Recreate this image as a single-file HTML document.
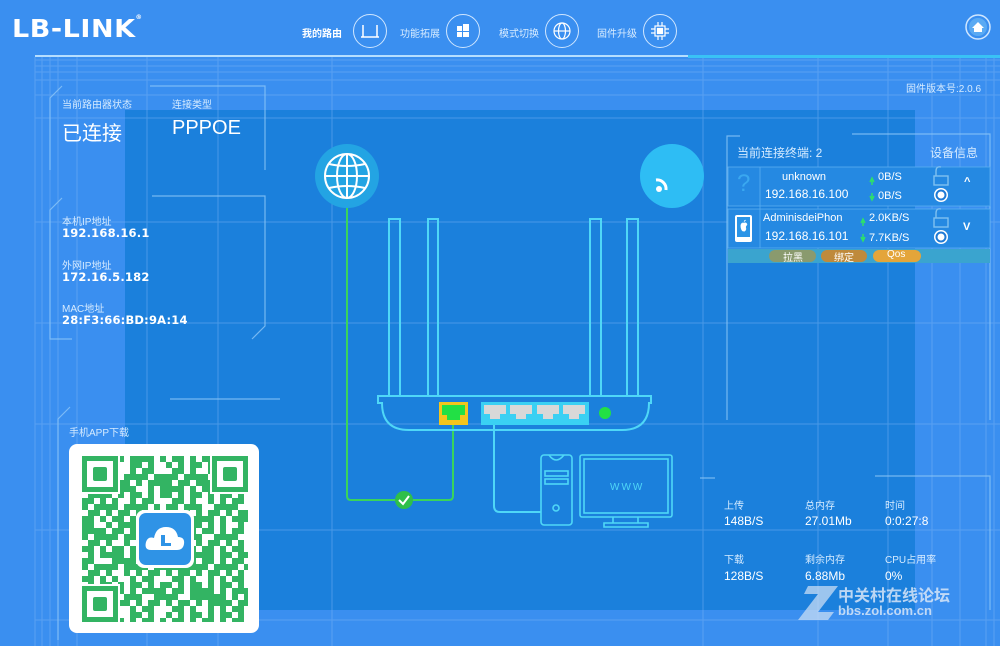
<!DOCTYPE html>
<html><head><meta charset="utf-8"><style>
*{margin:0;padding:0;box-sizing:border-box}
body{width:1000px;height:646px;overflow:hidden;background:#3a8ff0;font-family:"Liberation Sans","Noto Sans CJK SC",sans-serif;color:#fff;position:relative}
.a{position:absolute;white-space:nowrap}
.s{font-size:10px;color:#d6ebff}
.m{font-family:"DejaVu Sans","Noto Sans CJK SC",sans-serif;font-weight:bold;font-size:11.5px;letter-spacing:0.2px}
.nav{font-size:10px;color:#d6ebff}
.ci{position:absolute;width:34px;height:34px;border:1.5px solid #cfe6ff;border-radius:50%}
</style></head><body>
<svg class="a" style="left:0;top:0" width="1000" height="646">
<defs>
<pattern id="qr" width="30" height="30" patternUnits="userSpaceOnUse" x="82" y="456">
<rect width="30" height="30" fill="#fff"/>
<g fill="#33b463">
<rect x="0" y="0" width="12" height="6"/><rect x="18" y="0" width="6" height="12"/><rect x="6" y="6" width="6" height="12"/><rect x="24" y="6" width="6" height="6"/>
<rect x="0" y="12" width="6" height="12"/><rect x="12" y="18" width="12" height="6"/><rect x="24" y="18" width="6" height="12"/><rect x="6" y="24" width="12" height="6"/><rect x="18" y="12" width="6" height="6"/>
</g>
</pattern>
<pattern id="qr2" width="42" height="36" patternUnits="userSpaceOnUse" x="82" y="456">
<g fill="#33b463"><rect x="12" y="0" width="6" height="6"/><rect x="30" y="24" width="12" height="6"/><rect x="0" y="30" width="6" height="6"/></g>
<g fill="#fff"><rect x="36" y="6" width="6" height="12"/><rect x="18" y="30" width="6" height="6"/></g>
</pattern>
</defs>
<rect x="125" y="110" width="790" height="500" fill="#1b80dc"/>
<g stroke="#7fb8f5" stroke-width="1" opacity="0.45">
<line x1="35" y1="60" x2="1000" y2="60"/><line x1="35" y1="66" x2="1000" y2="66"/><line x1="35" y1="72" x2="1000" y2="72"/><line x1="35" y1="80" x2="1000" y2="80"/><line x1="35" y1="95" x2="1000" y2="95"/>
<line x1="35" y1="118" x2="1000" y2="118"/><line x1="35" y1="222" x2="1000" y2="222"/><line x1="35" y1="323" x2="1000" y2="323"/><line x1="35" y1="424" x2="1000" y2="424"/><line x1="35" y1="530" x2="1000" y2="530"/><line x1="35" y1="620" x2="1000" y2="620"/>
<line x1="35" y1="57" x2="35" y2="646"/><line x1="42" y1="57" x2="42" y2="646"/><line x1="50" y1="57" x2="50" y2="646"/><line x1="58" y1="57" x2="58" y2="646"/><line x1="77" y1="57" x2="77" y2="646"/><line x1="147" y1="57" x2="147" y2="646"/><line x1="218" y1="57" x2="218" y2="646"/><line x1="332" y1="57" x2="332" y2="646"/><line x1="703" y1="57" x2="703" y2="646"/><line x1="818" y1="57" x2="818" y2="646"/><line x1="888" y1="57" x2="888" y2="646"/><line x1="932" y1="57" x2="932" y2="646"/><line x1="960" y1="57" x2="960" y2="646"/><line x1="986" y1="57" x2="986" y2="646"/><line x1="994" y1="57" x2="994" y2="646"/>
</g>
<line x1="35" y1="56" x2="688" y2="56" stroke="#b5deff" stroke-width="2"/>
<line x1="688" y1="56.5" x2="1000" y2="56.5" stroke="#39c2f5" stroke-width="3"/>
<g fill="none" stroke="#8cc6f7" stroke-width="1.2" opacity="0.8">
<path d="M62 86 L50 98 L50 170 M150 86 L265 86 L265 170"/>
<path d="M62 198 L50 210 L50 339 L72 339 M152 196 L265 196 L265 326 L252 339"/>
<path d="M70 407 L58 419 L58 640 M170 399 L280 399"/>
<path d="M740 136 L727 136 L727 420 M852 134 L990 134 L990 420"/>
<path d="M700 478 L715 478 M875 476 L990 476 L990 610"/>
</g>
<path d="M347 205 L347 496 Q347 500 351 500 L449 500 Q453 500 453 496 L453 422" fill="none" stroke="#3ad45a" stroke-width="2"/>
<circle cx="404" cy="500" r="9" fill="#2fbf4a"/>
<path d="M399 500 L403 504 L409 496" fill="none" stroke="#fff" stroke-width="2"/>
<path d="M494 422 L494 506 Q494 512 500 512 L541 512" fill="none" stroke="#4fd7f7" stroke-width="2"/>
<circle cx="347" cy="176" r="32" fill="#23a4e3"/>
<g fill="none" stroke="#fff" stroke-width="2"><circle cx="347" cy="176" r="22"/><ellipse cx="347" cy="176" rx="10" ry="22"/><line x1="347" y1="154" x2="347" y2="198"/><line x1="325" y1="176" x2="369" y2="176"/><path d="M329 164 Q347 168 365 164 M329 188 Q347 184 365 188"/></g>
<circle cx="672" cy="176" r="32" fill="#2ebdf4"/>
<circle cx="659" cy="189" r="3" fill="#fff"/>
<path d="M656 180 A9 9 0 0 1 666 190" fill="none" stroke="#fff" stroke-width="3"/>
<g fill="none" stroke="#4fd7f7" stroke-width="2">
<path d="M389 396 L389 219 L400 219 L400 396 M428 396 L428 219 L438 219 L438 396 L590 396 L590 219 L601 219 L601 396 M627 396 L627 219 L638 219 L638 396"/>
<path d="M378 396 L651 396 L651 403 L649 403 Q649 430 622 430 L409 430 Q382 430 382 403 L378 403 Z"/>
</g>
<rect x="439" y="402" width="29" height="23" fill="#f3c51d"/>
<rect x="442" y="405" width="23" height="10" fill="#22e045"/><rect x="447" y="415" width="13" height="5" fill="#22e045"/>
<rect x="481" y="402" width="108" height="23" fill="#3ad0f3"/>
<g fill="#d8d8d8"><rect x="484" y="405" width="22" height="9"/><rect x="490" y="414" width="10" height="5"/><rect x="510" y="405" width="22" height="9"/><rect x="516" y="414" width="10" height="5"/><rect x="537" y="405" width="22" height="9"/><rect x="543" y="414" width="10" height="5"/><rect x="563" y="405" width="22" height="9"/><rect x="569" y="414" width="10" height="5"/></g>
<circle cx="605" cy="413" r="6" fill="#22e045"/>
<g fill="none" stroke="#4fd7f7" stroke-width="1.6">
<rect x="541" y="455" width="31" height="70" rx="3"/><path d="M549 455 Q556 465 564 455"/><rect x="545" y="471" width="23" height="5"/><rect x="545" y="479" width="23" height="5"/><circle cx="556" cy="508" r="3"/>
<rect x="580" y="455" width="92" height="62" rx="2"/><rect x="584" y="459" width="84" height="54"/><path d="M613 517 L613 523 M638 517 L638 523 M604 523 L648 523 L648 527 L604 527Z"/>
</g>
<text x="610" y="490" font-size="10" fill="#4fd7f7" font-family="Liberation Sans" letter-spacing="2">WWW</text>
<!-- QR -->
<rect x="69" y="444" width="190" height="189" rx="8" fill="#fff"/>
<rect x="82" y="456" width="166" height="166" fill="url(#qr)"/>
<rect x="82" y="456" width="166" height="166" fill="url(#qr2)"/>
<g>
<rect x="80" y="454" width="40" height="40" fill="#fff"/><rect x="84.5" y="458.5" width="31" height="31" fill="none" stroke="#33b463" stroke-width="5"/><rect x="93" y="467" width="14" height="14" rx="2" fill="#33b463"/>
<rect x="210" y="454" width="40" height="40" fill="#fff"/><rect x="214.5" y="458.5" width="31" height="31" fill="none" stroke="#33b463" stroke-width="5"/><rect x="223" y="467" width="14" height="14" rx="2" fill="#33b463"/>
<rect x="80" y="584" width="40" height="40" fill="#fff"/><rect x="84.5" y="588.5" width="31" height="31" fill="none" stroke="#33b463" stroke-width="5"/><rect x="93" y="597" width="14" height="14" rx="2" fill="#33b463"/>
</g>
<rect x="136" y="510" width="58" height="58" rx="8" fill="#fff"/>
<rect x="139" y="513" width="52" height="52" rx="7" fill="#2f93e6"/>
<path d="M151 550 Q144 550 146 542 Q148 536 154 538 Q156 527 166 527 Q176 527 178 537 Q185 537 184 544 Q183 550 177 550 Z" fill="#fff"/>
<rect x="161" y="535" width="4" height="11" fill="#2f93e6"/><rect x="161" y="543" width="10" height="3" fill="#2f93e6"/>
<rect x="728" y="167" width="262" height="39" fill="#2589e2" stroke="#5aaef0" stroke-width="0.8"/>
<rect x="728" y="209" width="262" height="39" fill="#2589e2" stroke="#5aaef0" stroke-width="0.8"/>
<line x1="760" y1="167" x2="760" y2="248" stroke="#5aaef0" stroke-width="0.8"/>
<rect x="728" y="249" width="262" height="14" fill="#3aa4cf"/>
<rect x="769" y="250" width="47" height="12" rx="6" fill="#8a9a6e"/>
<rect x="821" y="250" width="46" height="12" rx="6" fill="#bf8a3c"/>
<rect x="873" y="250" width="48" height="12" rx="6" fill="#e4a53a"/>
<rect x="735" y="215" width="17" height="27" rx="2" fill="#fff"/><rect x="737" y="217" width="13" height="20" fill="#2b94e6"/>
<path d="M741 228 Q740 222 744 223 Q747 222 747 225 Q745 226 746 229 Q745 232 744 231 Q742 232 741 228Z M744 222 Q744 220 746 220" fill="#fff" stroke="#fff" stroke-width="0.5"/>
<g fill="none" stroke="#7fc0f0" stroke-width="1.4"><rect x="934" y="176" width="14" height="9"/><path d="M936 176 L936 171 Q936 166 941 167"/><rect x="934" y="218" width="14" height="9"/><path d="M936 218 L936 213 Q936 208 941 209"/></g>
<circle cx="941" cy="195" r="7" fill="#fff"/><circle cx="941" cy="195" r="4.5" fill="none" stroke="#1e7ad6" stroke-width="2"/>
<circle cx="941" cy="237" r="7" fill="#fff"/><circle cx="941" cy="237" r="4.5" fill="none" stroke="#1e7ad6" stroke-width="2"/>
<path d="M870 182 L872 178 L874 182 M872 178 L872 185" stroke="#2ee06a" stroke-width="1.5" fill="none"/>
<path d="M870 196 L872 200 L874 196 M872 193 L872 200" stroke="#2ee06a" stroke-width="1.5" fill="none"/>
<path d="M861 223 L863 219 L865 223 M863 219 L863 226" stroke="#2ee06a" stroke-width="1.5" fill="none"/>
<path d="M861 237 L863 241 L865 237 M863 234 L863 241" stroke="#2ee06a" stroke-width="1.5" fill="none"/>
<g fill="none" stroke="#fff" stroke-width="1.5"><path d="M363 25 L363 37 L377 37 L377 25 M361 37 L379 37"/></g>
<g fill="#fff"><rect x="457" y="26" width="5" height="5"/><rect x="463" y="24" width="6" height="7"/><rect x="457" y="32" width="5" height="5"/><rect x="463" y="32" width="6" height="5"/></g>
<g fill="none" stroke="#fff" stroke-width="1.2"><circle cx="562" cy="31" r="8"/><ellipse cx="562" cy="31" rx="3.5" ry="8"/><line x1="554" y1="31" x2="570" y2="31"/></g>
<g fill="none" stroke="#fff" stroke-width="1.2"><rect x="655" y="26" width="10" height="10"/><rect x="657.5" y="28.5" width="5" height="5" fill="#fff"/><path d="M651 29h4M651 33h4M665 29h4M665 33h4M658 22v4M662 22v4M658 36v4M662 36v4"/></g>
<circle cx="978" cy="27" r="12" fill="none" stroke="#cfe6ff" stroke-width="1.5"/>
<circle cx="978" cy="27" r="9" fill="#5aaaf3"/>
<path d="M972 28 L978 22 L984 28 L982 28 L982 32 L974 32 L974 28Z" fill="#fff"/>
<g opacity="0.75"><path d="M808 586 L838 586 L818 612 L834 612 L828 620 L798 620 L818 594 L804 594Z" fill="#c8dcf4"/></g>
</svg>

<div class="a" style="left:12px;top:14px;font-size:25px;font-weight:900;font-family:'DejaVu Sans','Liberation Sans',sans-serif;letter-spacing:0.5px;transform:scaleX(1.08);transform-origin:left">LB-LINK<span style="font-size:6px;vertical-align:top">®</span></div>
<div class="ci" style="left:353px;top:14px"></div>
<div class="ci" style="left:446px;top:14px"></div>
<div class="ci" style="left:545px;top:14px"></div>
<div class="ci" style="left:643px;top:14px"></div>
<div class="a nav" style="left:302px;top:25px;color:#fff;font-weight:bold">我的路由</div>
<div class="a nav" style="left:400px;top:25px">功能拓展</div>
<div class="a nav" style="left:499px;top:25px">模式切换</div>
<div class="a nav" style="left:597px;top:25px">固件升级</div>
<div class="a s" style="left:906px;top:80px">固件版本号:2.0.6</div>

<div class="a s" style="left:62px;top:96px">当前路由器状态</div>
<div class="a s" style="left:172px;top:96px">连接类型</div>
<div class="a" style="left:62px;top:117px;font-size:20px">已连接</div>
<div class="a" style="left:172px;top:117px;font-size:20px">PPPOE</div>
<div class="a s" style="left:62px;top:213px">本机IP地址</div>
<div class="a m" style="left:62px;top:226px">192.168.16.1</div>
<div class="a s" style="left:62px;top:257px">外网IP地址</div>
<div class="a m" style="left:62px;top:270px">172.16.5.182</div>
<div class="a s" style="left:62px;top:300px">MAC地址</div>
<div class="a m" style="left:62px;top:313px">28:F3:66:BD:9A:14</div>
<div class="a s" style="left:69px;top:424px">手机APP下载</div>

<div class="a" style="left:737px;top:144px;font-size:12px;color:#d6ebff">当前连接终端: 2</div>
<div class="a" style="left:930px;top:144px;font-size:12px;color:#d6ebff">设备信息</div>
<div class="a" style="left:737px;top:170px;font-size:24px;color:#3aa8f0">?</div>
<div class="a" style="left:782px;top:171px;font-size:11px">unknown</div>
<div class="a" style="left:765px;top:187px;font-size:12px">192.168.16.100</div>
<div class="a" style="left:878px;top:171px;font-size:11px">0B/S</div>
<div class="a" style="left:878px;top:190px;font-size:11px">0B/S</div>
<div class="a" style="left:763px;top:212px;font-size:11px">AdminisdeiPhon</div>
<div class="a" style="left:765px;top:229px;font-size:12px">192.168.16.101</div>
<div class="a" style="left:869px;top:212px;font-size:11px">2.0KB/S</div>
<div class="a" style="left:869px;top:232px;font-size:11px">7.7KB/S</div>
<div class="a" style="left:964px;top:176px;font-size:11px;font-weight:bold">^</div>
<div class="a" style="left:963px;top:221px;font-size:11px;font-weight:bold">V</div>
<div class="a" style="left:783px;top:249px;font-size:10px">拉黑</div>
<div class="a" style="left:834px;top:249px;font-size:10px">绑定</div>
<div class="a" style="left:887px;top:249px;font-size:10px">Qos</div>

<div class="a s" style="left:724px;top:497px">上传</div>
<div class="a s" style="left:805px;top:497px">总内存</div>
<div class="a s" style="left:885px;top:497px">时间</div>
<div class="a" style="left:724px;top:514px;font-size:12px">148B/S</div>
<div class="a" style="left:805px;top:514px;font-size:12px">27.01Mb</div>
<div class="a" style="left:885px;top:514px;font-size:12px">0:0:27:8</div>
<div class="a s" style="left:724px;top:551px">下载</div>
<div class="a s" style="left:805px;top:551px">剩余内存</div>
<div class="a s" style="left:885px;top:551px">CPU占用率</div>
<div class="a" style="left:724px;top:569px;font-size:12px">128B/S</div>
<div class="a" style="left:805px;top:569px;font-size:12px">6.88Mb</div>
<div class="a" style="left:885px;top:569px;font-size:12px">0%</div>
<div class="a" style="left:838px;top:582px;font-size:16px;font-weight:bold;color:#d8e6f8;opacity:.85">中关村在线论坛</div>
<div class="a" style="left:838px;top:603px;font-size:13px;font-weight:bold;color:#d8e6f8;opacity:.85">bbs.zol.com.cn</div>
</body></html>
